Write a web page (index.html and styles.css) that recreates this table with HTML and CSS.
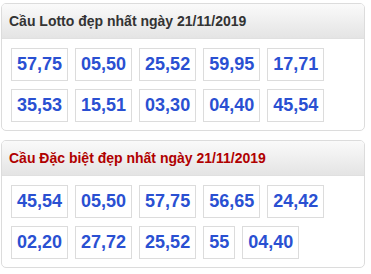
FILE: index.html
```html
<!DOCTYPE html>
<html>
<head>
<meta charset="utf-8">
<link rel="stylesheet" href="styles.css">
</head>
<body>
<div class="panel">
  <div class="panel-head">Cầu Lotto đẹp nhất ngày 21/11/2019</div>
  <div class="panel-body">
    <span class="num">57,75</span>
    <span class="num">05,50</span>
    <span class="num">25,52</span>
    <span class="num">59,95</span>
    <span class="num">17,71</span>
    <span class="num">35,53</span>
    <span class="num">15,51</span>
    <span class="num">03,30</span>
    <span class="num">04,40</span>
    <span class="num">45,54</span>
  </div>
</div>
<div class="panel">
  <div class="panel-head red">Cầu Đặc biệt đẹp nhất ngày 21/11/2019</div>
  <div class="panel-body">
    <span class="num">45,54</span>
    <span class="num">05,50</span>
    <span class="num">57,75</span>
    <span class="num">56,65</span>
    <span class="num">24,42</span>
    <span class="num">02,20</span>
    <span class="num">27,72</span>
    <span class="num">25,52</span>
    <span class="num">55</span>
    <span class="num">04,40</span>
  </div>
</div>
</body>
</html>
```
FILE: styles.css
```css
body {
  margin: 3px 0 0 1px;
  font-family: "Liberation Sans", Arial, sans-serif;
  background: #fff;
}
.panel {
  width: 362px;
  border: 1px solid #dcdcdc;
  border-radius: 5px;
  margin-bottom: 9px;
  overflow: hidden;
}
.panel-head {
  height: 34px;
  line-height: 34px;
  padding-left: 7px;
  font-size: 14px;
  font-weight: bold;
  color: #333;
  background: linear-gradient(#fafafa, #e4e4e4);
  border-bottom: 1px solid #e0e0e0;
}
.panel-head.red {
  color: #b00000;
}
.panel-body {
  display: flex;
  flex-wrap: wrap;
  gap: 8px 7px;
  padding: 9px 9px 8px;
}
.num {
  border: 1px solid #dcdcdc;
  padding: 0 5px;
  height: 31px;
  line-height: 31px;
  font-size: 18px;
  font-weight: bold;
  color: #2a50d2;
}
```
